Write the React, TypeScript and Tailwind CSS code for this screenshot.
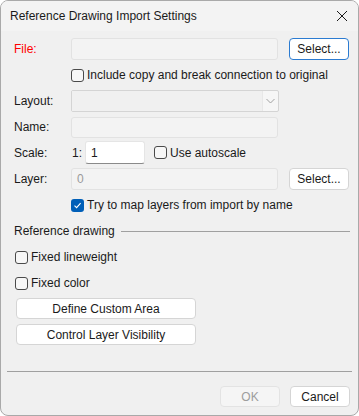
import React from 'react';

function CheckBox({ checked = false }: { checked?: boolean }) {
  if (checked) {
    return (
      <span className="flex h-[13px] w-[13px] shrink-0 items-center justify-center rounded-[3px] bg-[#005fb8]">
        <svg width="9" height="9" viewBox="0 0 9 9">
          <path d="M1.5 4.7 L3.6 6.7 L7.6 2.2" fill="none" stroke="#ffffff" strokeWidth="1.1" />
        </svg>
      </span>
    );
  }
  return <span className="block h-[13px] w-[13px] shrink-0 rounded-[3px] border border-[#4a4a4a] bg-[#f7f7f7]" />;
}

function Label({ text, red = false }: { text: string; red?: boolean }) {
  return <span className={`w-[57px] shrink-0 ${red ? 'text-[#ff0000]' : 'text-[#1a1a1a]'}`}>{text}</span>;
}

function Button({ text, focused = false, disabled = false, className = '' }: { text: string; focused?: boolean; disabled?: boolean; className?: string }) {
  const tone = disabled
    ? 'border-[#e3e3e3] bg-[#f5f5f5] text-[#9d9d9d]'
    : focused
      ? 'border-[#2b7bd1] bg-white text-[#1a1a1a]'
      : 'border-[#d5d5d5] bg-white text-[#1a1a1a]';
  return (
    <div className={`flex items-center justify-center rounded-[4px] border ${tone} ${className}`}>
      {text}
    </div>
  );
}

export default function App() {
  return (
    <div className="h-[416px] w-[359px] bg-white" style={{ fontFamily: '"Liberation Sans", Arial, sans-serif' }}>
      <div className="flex h-[416px] w-[359px] flex-col overflow-hidden rounded-[8px] border border-[#a9a9a9] bg-[#f0f0f0] text-[12px] leading-none text-[#1a1a1a]">
        {/* Title bar */}
        <div className="flex h-[30px] shrink-0 items-center justify-between bg-[#f3f3f3] pl-[9px] pr-[9px]">
          <span className="text-[12px] text-[#1a1a1a]">Reference Drawing Import Settings</span>
          <svg width="12" height="12" viewBox="0 0 12 12" className="mr-[1px]">
            <path d="M1 1 L11 11 M11 1 L1 11" stroke="#1a1a1a" strokeWidth="1" />
          </svg>
        </div>

        <div className="flex flex-col pl-[13px] pr-[8px]">
          {/* File */}
          <div className="mt-[7px] flex h-[22px] items-center">
            <Label text="File:" red />
            <div className="h-[22px] w-[207px] rounded-[3px] border border-[#e2e2e2] bg-[#f3f3f3]" />
            <Button text="Select..." focused className="ml-[11px] h-[22px] w-[60px]" />
          </div>

          {/* Include copy */}
          <div className="mt-[5px] flex h-[20px] items-center pl-[57px]">
            <CheckBox />
            <span className="ml-[3px]">Include copy and break connection to original</span>
          </div>

          {/* Layout */}
          <div className="mt-[5px] flex h-[22px] items-center">
            <Label text="Layout:" />
            <div className="flex h-[22px] w-[208px] items-stretch rounded-[2px] border border-[#d4d4d4] bg-[#f6f6f6]">
              <div className="flex-1 border-r border-[#e8e8e8] bg-[#f0f0f0]" />
              <div className="flex w-[15px] items-center justify-center">
                <svg width="9" height="6" viewBox="0 0 9 6">
                  <path d="M0.5 1 L4.5 5 L8.5 1" fill="none" stroke="#a0a0a0" strokeWidth="1" />
                </svg>
              </div>
            </div>
          </div>

          {/* Name */}
          <div className="mt-[4px] flex h-[22px] items-center">
            <Label text="Name:" />
            <div className="h-[21px] w-[207px] rounded-[3px] border border-[#e2e2e2] bg-[#f3f3f3]" />
          </div>

          {/* Scale */}
          <div className="mt-[3px] flex h-[23px] items-center">
            <Label text="Scale:" />
            <span className="ml-[1px] w-[13px]">1:</span>
            <div className="flex h-[23px] w-[60px] items-center rounded-[3px] border border-[#e5e5e5] border-b-[#8a8a8a] bg-white pl-[5px]">
              1
            </div>
            <div className="ml-[9px] flex items-center">
              <CheckBox />
              <span className="ml-[3px]">Use autoscale</span>
            </div>
          </div>

          {/* Layer */}
          <div className="mt-[4px] flex h-[22px] items-center">
            <Label text="Layer:" />
            <div className="flex h-[22px] w-[207px] items-center rounded-[3px] border border-[#e2e2e2] bg-[#f3f3f3] pl-[5px] text-[#9a9a9a]">
              0
            </div>
            <Button text="Select..." className="ml-[11px] h-[22px] w-[60px]" />
          </div>

          {/* Try to map */}
          <div className="mt-[5px] flex h-[20px] items-center pl-[57px]">
            <CheckBox checked />
            <span className="ml-[3px]">Try to map layers from import by name</span>
          </div>

          {/* Reference drawing group */}
          <div className="mt-[6px] flex h-[20px] items-center">
            <span>Reference drawing</span>
            <div className="ml-[6px] h-px flex-1 bg-[#a0a0a0]" />
          </div>

          <div className="mt-[6px] flex h-[20px] items-center pl-[1px]">
            <CheckBox />
            <span className="ml-[3px]">Fixed lineweight</span>
          </div>

          <div className="mt-[6px] flex h-[20px] items-center pl-[1px]">
            <CheckBox />
            <span className="ml-[3px]">Fixed color</span>
          </div>

          <Button text="Define Custom Area" className="ml-[2px] mt-[5px] h-[21px] w-[180px]" />
          <Button text="Control Layer Visibility" className="ml-[2px] mt-[5px] h-[21px] w-[180px]" />
        </div>

        {/* Footer */}
        <div className="mx-[6px] mt-[26px] h-px bg-[#a0a0a0]" />
        <div className="mt-[14px] flex justify-end gap-[10px] pr-[8px]">
          <Button text="OK" disabled className="h-[21px] w-[60px]" />
          <Button text="Cancel" className="h-[21px] w-[60px]" />
        </div>
      </div>
    </div>
  );
}
